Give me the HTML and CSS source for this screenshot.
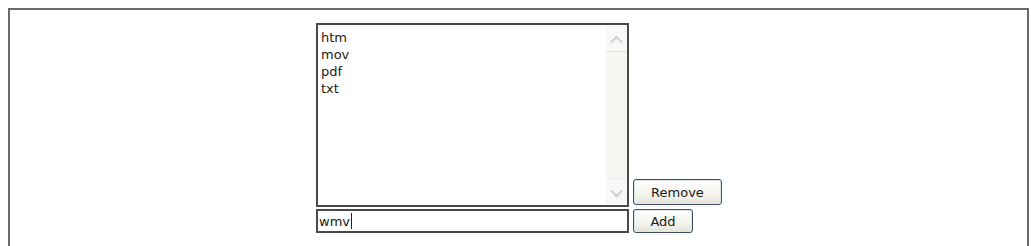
FILE: index.html
```html
<!DOCTYPE html>
<html>
<head>
<meta charset="utf-8">
<link rel="stylesheet" href="styles.css">
</head>
<body>
<div class="frame">
  <div class="editor">
    <div class="listbox">
      <ul class="items">
        <li>htm</li>
        <li>mov</li>
        <li>pdf</li>
        <li>txt</li>
      </ul>
      <div class="scrollbar">
        <div class="arrow up">
          <svg width="15" height="9" viewBox="0 0 15 9"><path d="M2 7.5 L7.5 2 L13 7.5" fill="none" stroke="#cfcfcf" stroke-width="2"/></svg>
        </div>
        <div class="track"></div>
        <div class="arrow down">
          <svg width="15" height="9" viewBox="0 0 15 9"><path d="M2 1.5 L7.5 7 L13 1.5" fill="none" stroke="#cfcfcf" stroke-width="2"/></svg>
        </div>
      </div>
    </div>
    <div class="cell-bottom"><button class="btn btn-remove">Remove</button></div>
    <div class="textbox"><span class="value">wmv</span><span class="caret"></span></div>
    <div><button class="btn btn-add">Add</button></div>
  </div>
</div>
</body>
</html>
```
FILE: styles.css
```css
html, body {
  margin: 0;
  padding: 0;
  background: #ffffff;
}
body {
  padding: 8px 2px 0 8px;
  font-family: "DejaVu Sans", Verdana, sans-serif;
  font-size: 13px;
  color: #1a1a1a;
}
.frame {
  border: 2px solid #6a6a6a;
  border-bottom: none;
  height: 238px;
  box-sizing: border-box;
  padding-top: 13px;
  display: flex;
  justify-content: center;
}
.editor {
  display: grid;
  grid-template-columns: 313px 90px;
  grid-template-rows: 184px 24px;
  column-gap: 4px;
  row-gap: 2px;
  align-self: flex-start;
  margin-left: 2px;
}
.listbox {
  border: 2px solid #4a4a4a;
  box-sizing: border-box;
  display: flex;
  background: #fff;
}
.items {
  list-style: none;
  margin: 0;
  padding: 4px 0 0 3px;
  flex: 1;
  line-height: 17px;
}
.scrollbar {
  width: 21px;
  background: #f6f6f2;
  display: flex;
  flex-direction: column;
  margin: 1px 0 1px 0;
}
.arrow {
  height: 26px;
  display: flex;
  justify-content: center;
  background: #f8f8f6;
}
.arrow.up {
  align-items: flex-start;
  padding-top: 9px;
  box-sizing: border-box;
  border-bottom: 1px solid #e2e2de;
}
.arrow.down {
  align-items: flex-end;
  padding-bottom: 6px;
  box-sizing: border-box;
  border-top: 1px solid #efefeb;
}
.track {
  flex: 1;
}
.cell-bottom {
  display: flex;
  align-items: flex-end;
  padding-bottom: 2px;
}
.btn {
  font-family: "DejaVu Sans", Verdana, sans-serif;
  font-size: 13px;
  color: #1a1a1a;
  height: 26px;
  border: 1px solid #3e4f66;
  border-radius: 3px;
  background: linear-gradient(#ffffff, #f2f1ea 70%, #e2e0d6);
  box-shadow: inset 0 0 0 1px #dde6f0;
  padding: 0;
  margin: 0;
}
.btn-remove {
  width: 89px;
}
.btn-add {
  width: 60px;
  height: 24px;
}
.textbox {
  border: 2px solid #4a4a4a;
  box-sizing: border-box;
  display: flex;
  align-items: center;
  padding-left: 1px;
  background: #fff;
}
.caret {
  display: inline-block;
  width: 1px;
  height: 16px;
  background: #222;
  margin-left: 1px;
}
```
